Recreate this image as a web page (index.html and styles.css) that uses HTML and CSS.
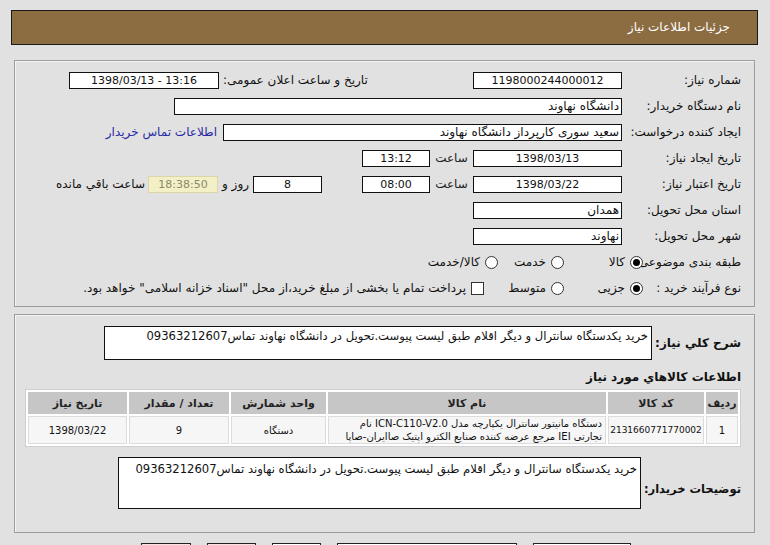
FILE: index.html
```html
<!DOCTYPE html>
<html lang="fa" dir="rtl">
<head>
<meta charset="utf-8">
<title>جزئیات اطلاعات نیاز</title>
<link rel="stylesheet" href="styles.css">
</head>
<body>
<div class="page">
  <div class="title">جزئیات اطلاعات نیاز</div>

  <div class="panel p1">
    <div class="row">
      <span class="lbl">شماره نیاز:</span>
      <span class="box w149 c num">1198000244000012</span>
      <span class="lbl2">تاریخ و ساعت اعلان عمومی:</span>
      <span class="box w150 c num ltr">1398/03/13 - 13:16</span>
    </div>
    <div class="row">
      <span class="lbl">نام دستگاه خریدار:</span>
      <span class="box w448">دانشگاه نهاوند</span>
    </div>
    <div class="row">
      <span class="lbl">ایجاد کننده درخواست:</span>
      <span class="box w399">سعید سوری کارپرداز دانشگاه نهاوند</span>
      <a class="link" href="#">اطلاعات تماس خریدار</a>
    </div>
    <div class="row">
      <span class="lbl">تاریخ ایجاد نیاز:</span>
      <span class="box w149 c num">1398/03/13</span>
      <span class="hour">ساعت</span>
      <span class="box w68 c num">13:12</span>
    </div>
    <div class="row">
      <span class="lbl">تاریخ اعتبار نیاز:</span>
      <span class="box w149 c num">1398/03/22</span>
      <span class="hour">ساعت</span>
      <span class="box w68 c num">08:00</span>
      <span class="box w69 c num gap40">8</span>
      <span class="day">روز و</span>
      <span class="box remain c num">18:38:50</span>
      <span class="left">ساعت باقي مانده</span>
    </div>
    <div class="row">
      <span class="lbl">استان محل تحویل:</span>
      <span class="box w149">همدان</span>
    </div>
    <div class="row">
      <span class="lbl">شهر محل تحویل:</span>
      <span class="box w149">نهاوند</span>
    </div>
    <div class="row">
      <span class="lbl lbl-r">طبقه بندی موضوعی:</span>
      <span class="radio on"></span><span class="opt o66">کالا</span>
      <span class="radio"></span><span class="opt o53">خدمت</span>
      <span class="radio"></span><span class="opt">کالا/خدمت</span>
    </div>
    <div class="row">
      <span class="lbl lbl-r">نوع فرآیند خرید :</span>
      <span class="radio on"></span><span class="opt o66">جزیی</span>
      <span class="radio"></span><span class="opt o67">متوسط</span>
      <span class="check"></span><span class="note">پرداخت تمام یا بخشی از مبلغ خرید،از محل "اسناد خزانه اسلامی" خواهد بود.</span>
    </div>
  </div>

  <div class="panel p2">
    <div class="drow">
      <span class="blbl w89">شرح کلي نیاز:</span>
      <div class="tbox desc">خرید یکدستگاه سانترال و دیگر اقلام طبق لیست پیوست.تحویل در دانشگاه نهاوند تماس09363212607</div>
    </div>
    <div class="sub">اطلاعات کالاهاي مورد نیاز</div>
    <table class="items">
      <thead>
        <tr>
          <th class="c1">ردیف</th>
          <th class="c2">کد کالا</th>
          <th class="c3">نام کالا</th>
          <th class="c4">واحد شمارش</th>
          <th class="c5">تعداد / مقدار</th>
          <th class="c6">تاریخ نیاز</th>
        </tr>
      </thead>
      <tbody>
        <tr>
          <td>1</td>
          <td class="code">2131660771770002</td>
          <td class="name">دستگاه مانیتور سانترال یکپارچه مدل ICN-C110-V2.0 نام<br>تجارتی IEI مرجع عرضه کننده صنایع الکترو اپتیک صاایران-صاپا</td>
          <td>دستگاه</td>
          <td>9</td>
          <td>1398/03/22</td>
        </tr>
      </tbody>
    </table>
    <div class="drow notes">
      <span class="blbl w100">توضیحات خریدار:</span>
      <div class="tbox buyer">خرید یکدستگاه سانترال و دیگر اقلام طبق لیست پیوست.تحویل در دانشگاه نهاوند تماس09363212607</div>
    </div>
  </div>

  <div class="buttons">
    <span class="btn w98"></span>
    <span class="btn w180"></span>
    <span class="btn w49"></span>
    <span class="btn pink w49"></span>
    <span class="btn pink w50"></span>
  </div>
</div>
</body>
</html>
```

FILE: styles.css
```css
* { box-sizing: border-box; }
html, body { margin: 0; padding: 0; }
body {
  background: #e1e1e1;
  font-family: "DejaVu Sans", sans-serif;
  font-size: 12px;
  color: #111;
  overflow: hidden;
}
.page {
  padding: 10px 12px 0 11px;
  height: 545px;
  overflow: hidden;
}
.title {
  height: 35px;
  background: #8c6c41;
  border: 1px solid #1a1a1a;
  color: #fff;
  font-size: 12px;
  line-height: 33px;
  padding-right: 27px;
}
.panel {
  margin: 0 3px;
  border: 1px solid #9c9c9c;
  box-shadow: inset 1px 1px 0 #f4f4f4;
}
.p1 {
  margin-top: 15px;
  padding: 6px 13px 5px 14px;
}
.row {
  height: 26px;
  display: flex;
  align-items: center;
  white-space: nowrap;
}
.lbl {
  width: 119px;
  flex: none;
}
.lbl-r { width: 98px; }
.box {
  flex: none;
  height: 17px;
  line-height: 15px;
  border: 1px solid #111;
  background: #fff;
  padding: 0 2px;
  overflow: hidden;
}
.num { font-size: 11px; }
.ltr { direction: ltr; }
.c { text-align: center; }
.w149 { width: 149px; }
.w150 { width: 150px; }
.w448 { width: 448px; }
.w399 { width: 399px; }
.w68 { width: 68px; }
.w69 { width: 69px; }
.lbl2 {
  width: 254px;
  text-align: left;
  padding-left: 4px;
}
.link {
  margin-right: 6px;
  color: #2a2aa5;
  text-decoration: none;
}
.hour {
  width: 43px;
  text-align: center;
  color: #222;
}
.gap40 { margin-right: 40px; }
.day {
  width: 35px;
  text-align: center;
}
.remain {
  width: 70px;
  background: #f3efc6;
  border-color: #dcd6a6;
  color: #8a8a6c;
}
.left { margin-right: 3px; }
.radio {
  flex: none;
  width: 13px;
  height: 13px;
  border: 1px solid #333;
  border-radius: 50%;
  background: #fff;
  position: relative;
}
.radio.on::after {
  content: "";
  position: absolute;
  left: 2px;
  top: 2px;
  width: 7px;
  height: 7px;
  border-radius: 50%;
  background: #000;
}
.opt {
  flex: none;
  padding-right: 5px;
}
.o66 { width: 66px; }
.o67 { width: 67px; }
.o53 { width: 53px; }
.check {
  flex: none;
  width: 13px;
  height: 13px;
  border: 1px solid #333;
  background: #fff;
}
.note { margin-right: 5px; }

.p2 {
  margin-top: 7px;
  padding: 11px 13px 23px 14px;
}
.drow {
  display: flex;
  align-items: center;
}
.blbl {
  flex: none;
  font-weight: bold;
  font-size: 12px;
  white-space: nowrap;
}
.w89 { width: 89px; }
.w100 { width: 100px; font-size: 11.5px; }
.tbox {
  background: #fff;
  border: 1px solid #111;
  padding: 2px 3px;
  line-height: 15px;
  font-size: 11.6px;
  white-space: nowrap;
  overflow: hidden;
}
.desc {
  width: 548px;
  height: 34px;
}
.sub {
  font-weight: bold;
  font-size: 12px;
  margin-top: 9px;
  height: 20px;
  line-height: 16px;
}
.items {
  width: 712px;
  border-collapse: separate;
  border-spacing: 2px;
  background: #fff;
  border: 1px solid #cfcfcf;
  margin: 0;
  table-layout: fixed;
}
.items th {
  background: #c6c6c6;
  height: 22px;
  font-size: 11px;
  font-weight: bold;
  color: #222;
  padding: 0;
}
.items td {
  background: #f6f6f6;
  border: 1px solid #dcdcdc;
  height: 28px;
  text-align: center;
  padding: 0 3px;
  font-size: 10px;
  line-height: 13px;
  white-space: nowrap;
  overflow: hidden;
}
.items td.code { font-size: 9px; padding: 0; }
.items td.name {
  text-align: right;
  font-size: 10px;
}
.c1 { width: 32px; }
.c2 { width: 96px; }
.c3 { width: 278px; }
.c4 { width: 95px; }
.c5 { width: 100px; }
.c6 { width: 99px; }
.notes {
  margin-top: 10px;
  align-items: flex-end;
}
.notes .blbl { padding-bottom: 13px; }
.buyer {
  width: 523px;
  height: 52px;
  padding-top: 4px;
}
.buttons {
  display: flex;
  gap: 16px;
  margin-top: 10px;
  padding-right: 127px;
}
.btn {
  height: 22px;
  border: 1px solid #222;
  background: #fff;
  flex: none;
}
.pink { background: #fbe3e3; }
.w50 { width: 50px; }
.w49 { width: 49px; }
.w180 { width: 180px; }
.w98 { width: 98px; }
```
